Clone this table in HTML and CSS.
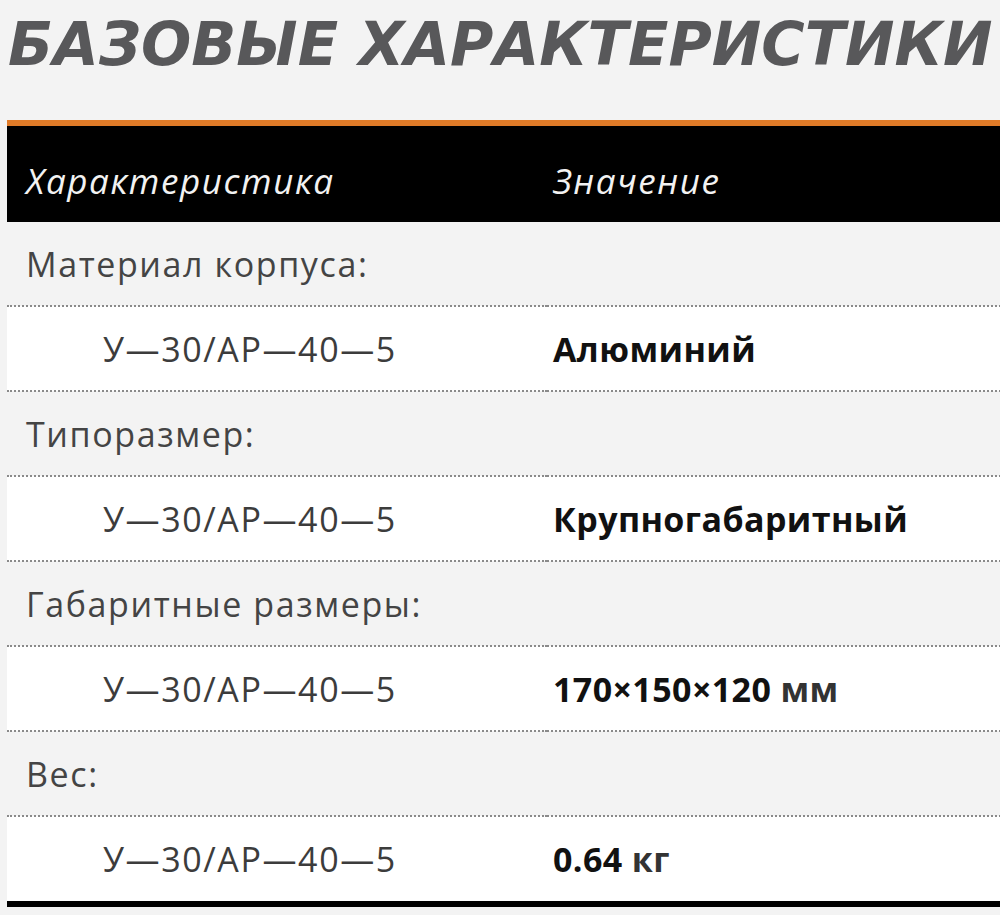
FILE: index.html
```html
<!DOCTYPE html>
<html lang="ru">
<head>
<meta charset="utf-8">
<title>Базовые характеристики</title>
<link rel="stylesheet" href="styles.css">
</head>
<body>
<div class="page">
  <h1 class="title">БАЗОВЫЕ ХАРАКТЕРИСТИКИ</h1>
  <table class="specs">
    <thead>
      <tr><th class="c1">Характеристика</th><th class="c2">Значение</th></tr>
    </thead>
    <tbody>
      <tr class="group"><td colspan="2">Материал корпуса:</td></tr>
      <tr class="item"><td class="c1">У—30/АР—40—5</td><td class="c2"><b>Алюминий</b></td></tr>
      <tr class="group"><td colspan="2">Типоразмер:</td></tr>
      <tr class="item"><td class="c1">У—30/АР—40—5</td><td class="c2"><b>Крупногабаритный</b></td></tr>
      <tr class="group"><td colspan="2">Габаритные размеры:</td></tr>
      <tr class="item"><td class="c1">У—30/АР—40—5</td><td class="c2"><b>170×150×120</b> <span class="unit">мм</span></td></tr>
      <tr class="group"><td colspan="2">Вес:</td></tr>
      <tr class="item last"><td class="c1">У—30/АР—40—5</td><td class="c2"><b>0.64</b> <span class="unit">кг</span></td></tr>
    </tbody>
  </table>
</div>
</body>
</html>
```
FILE: styles.css
```css
html, body {
  margin: 0;
  padding: 0;
  background: #f3f3f3;
  overflow: hidden;
}
.page {
  padding: 11px 0 0 7px;
  width: 1030px;
  font-family: "Open Sans", "Noto Sans", sans-serif;
}
.title {
  margin: 0 0 0 1px;
  height: 109px;
  font-family: "DejaVu Sans", sans-serif;
  font-weight: bold;
  font-style: italic;
  font-size: 61px;
  line-height: 66px;
  letter-spacing: 0;
  color: #58585a;
  white-space: nowrap;
  transform: scaleX(0.97);
  transform-origin: left;
}
.specs {
  width: 1030px;
  border-collapse: collapse;
  border-top: 6px solid #e07b28;
  border-bottom: 6px solid #000;
}
.specs th {
  background: #000;
  color: #f2f2f2;
  font-style: italic;
  font-weight: 400;
  font-size: 35px;
  letter-spacing: 1.6px;
  text-align: left;
  height: 84px;
  padding: 12px 0 0 0;
  vertical-align: middle;
}
.specs th.c1 { padding-left: 19px; width: 521px; }
.specs th.c2 { padding-left: 6px; }
.specs td {
  height: 83px;
  padding: 0;
  border-bottom: 2px dotted #8a8a8a;
  font-size: 34px;
  letter-spacing: 1.6px;
  color: #3a3a3a;
  vertical-align: middle;
}
.group td {
  background: #f3f3f3;
  padding-left: 19px;
  color: #444;
}
.item td { background: #fff; }
.item td.c1 { padding-left: 96px; color: #3c3c3c; }
.item td.c2 { padding-left: 6px; color: #111; letter-spacing: 0.4px; }
.item.last td { border-bottom: none; height: 84px; }
.item b { font-weight: 700; color: #111; }
.unit { font-weight: 700; color: #333; }
```
